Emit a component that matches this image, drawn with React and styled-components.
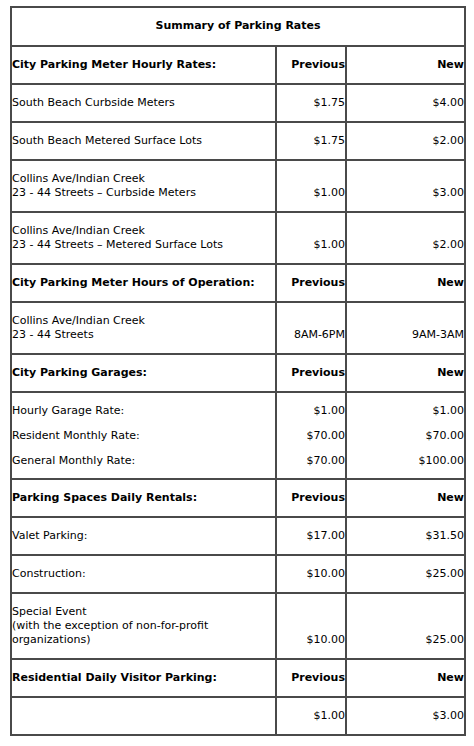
import React from "react";
import styled, { createGlobalStyle } from "styled-components";

const Global = createGlobalStyle`
  html, body { margin: 0; padding: 0; background: #fff; }
  body { font-family: "DejaVu Sans", Verdana, sans-serif; font-size: 11px; color: #000; }
`;

const Page = styled.div`
  padding: 6px 0 0 10px;
`;

const Table = styled.table`
  border-collapse: collapse;
  table-layout: fixed;
  width: 456px;
  border: 2px solid #454545;
`;

const Cell = styled.td`
  border: 2px solid #4a4a4a;
  padding: ${(p) => (p.$tall ? "5px 0" : "11px 0")};
  line-height: ${(p) => (p.$tall ? "25px" : "14px")};
  text-align: ${(p) => p.$align || "left"};
  vertical-align: bottom;
  font-weight: ${(p) => (p.$bold ? 700 : 400)};
  white-space: nowrap;
`;

const TitleCell = styled.th`
  border: 2px solid #4a4a4a;
  padding: 11px 0 12px;
  line-height: 14px;
  font-weight: 700;
  text-align: center;
`;

const Line = styled.div``;

const sections = [
  {
    title: "City Parking Meter Hourly Rates:",
    rows: [
      { label: ["South Beach Curbside Meters"], prev: ["$1.75"], next: ["$4.00"] },
      { label: ["South Beach Metered Surface Lots"], prev: ["$1.75"], next: ["$2.00"] },
      { label: ["Collins Ave/Indian Creek", "23 - 44 Streets \u2013 Curbside Meters"], prev: ["$1.00"], next: ["$3.00"] },
      { label: ["Collins Ave/Indian Creek", "23 - 44 Streets \u2013 Metered Surface Lots"], prev: ["$1.00"], next: ["$2.00"] },
    ],
  },
  {
    title: "City Parking Meter Hours of Operation:",
    rows: [
      { label: ["Collins Ave/Indian Creek", "23 - 44 Streets"], prev: ["8AM-6PM"], next: ["9AM-3AM"] },
    ],
  },
  {
    title: "City Parking Garages:",
    rows: [
      {
        tall: true,
        label: ["Hourly Garage Rate:", "Resident Monthly Rate:", "General Monthly Rate:"],
        prev: ["$1.00", "$70.00", "$70.00"],
        next: ["$1.00", "$70.00", "$100.00"],
      },
    ],
  },
  {
    title: "Parking Spaces Daily Rentals:",
    rows: [
      { label: ["Valet Parking:"], prev: ["$17.00"], next: ["$31.50"] },
      { label: ["Construction:"], prev: ["$10.00"], next: ["$25.00"] },
      {
        label: ["Special Event", "(with the exception of non-for-profit", "organizations)"],
        prev: ["$10.00"],
        next: ["$25.00"],
      },
    ],
  },
  {
    title: "Residential Daily Visitor Parking:",
    rows: [{ label: [""], prev: ["$1.00"], next: ["$3.00"] }],
  },
];

const Lines = ({ items }) =>
  items.map((t, i) => <Line key={i}>{t || "\u00a0"}</Line>);

export default function App() {
  return (
    <>
      <Global />
      <Page>
        <Table>
          <colgroup>
            <col style={{ width: 265 }} />
            <col style={{ width: 70 }} />
            <col />
          </colgroup>
          <thead>
            <tr>
              <TitleCell colSpan={3}>Summary of Parking Rates</TitleCell>
            </tr>
          </thead>
          <tbody>
            {sections.map((s) => (
              <React.Fragment key={s.title}>
                <tr>
                  <Cell $bold>{s.title}</Cell>
                  <Cell $bold $align="right">Previous</Cell>
                  <Cell $bold $align="right">New</Cell>
                </tr>
                {s.rows.map((r, i) => (
                  <tr key={i}>
                    <Cell $tall={r.tall}><Lines items={r.label} /></Cell>
                    <Cell $tall={r.tall} $align="right"><Lines items={r.prev} /></Cell>
                    <Cell $tall={r.tall} $align="right"><Lines items={r.next} /></Cell>
                  </tr>
                ))}
              </React.Fragment>
            ))}
          </tbody>
        </Table>
      </Page>
    </>
  );
}
